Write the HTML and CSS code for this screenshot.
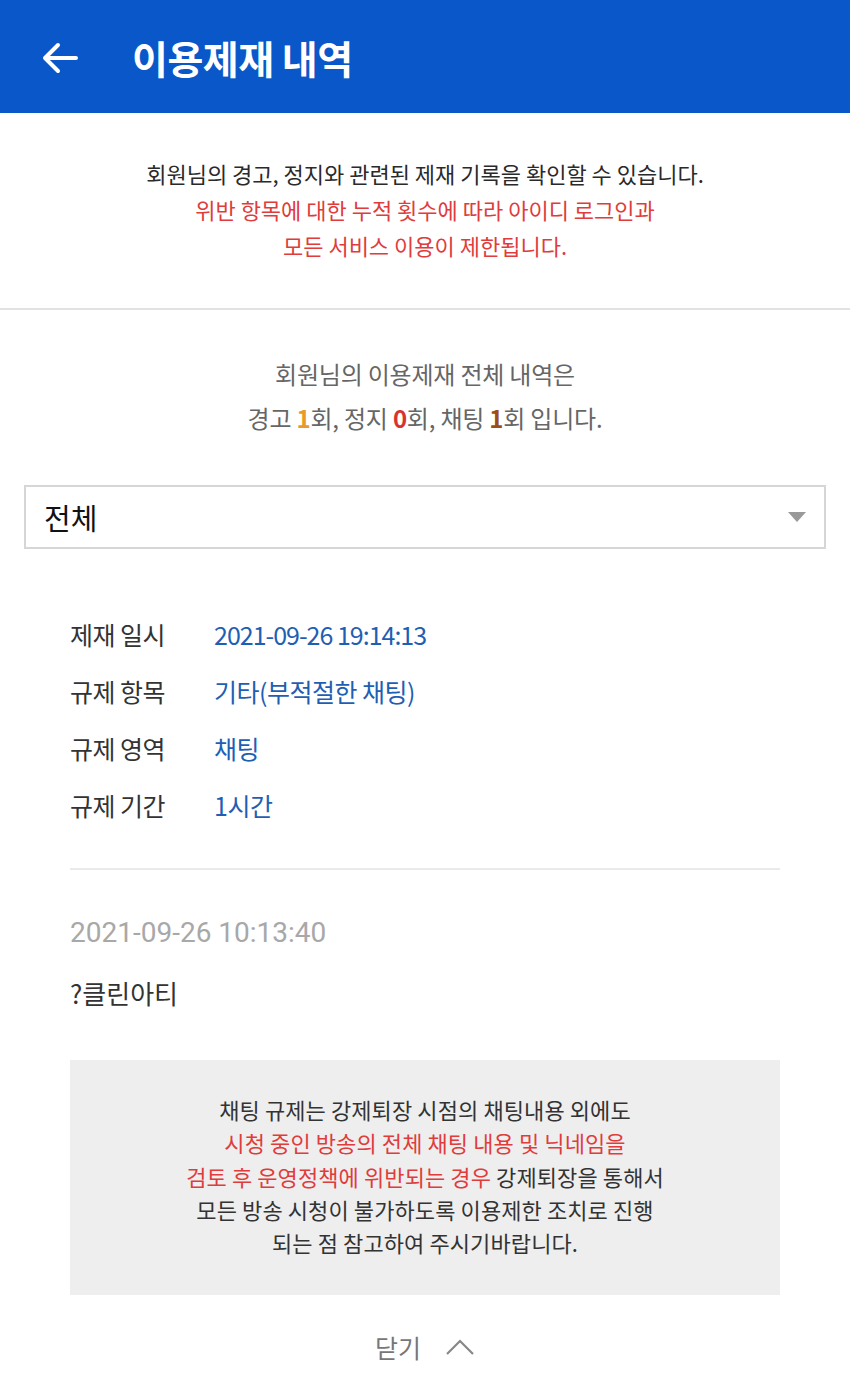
FILE: index.html
```html
<!DOCTYPE html>
<html>

<head>
    <meta charset="UTF-8">
    <title>이용제재 내역</title>

    <link rel="stylesheet" href="styles.css">

</head>

<body>

    <header class="topbar">
        <svg class="back" width="40" height="36" viewBox="0 0 40 36">
            <path d="M36 18 H5 M18 5 L5 18 L18 31" fill="none" stroke="#fff" stroke-width="4" stroke-linecap="round" stroke-linejoin="round"/>
        </svg>
        <h1>이용제재 내역</h1>
    </header>

    <section class="notice">
        <p>회원님의 경고, 정지와 관련된 제재 기록을 확인할 수 있습니다.</p>
        <p class="red">위반 항목에 대한 누적 횟수에 따라 아이디 로그인과<br>모든 서비스 이용이 제한됩니다.</p>
    </section>

    <section class="summary">
        <p>회원님의 이용제재 전체 내역은</p>
        <p>경고 <b class="warn">1</b>회, 정지 <b class="stop">0</b>회, 채팅 <b class="chat">1</b>회 입니다.</p>
    </section>

    <div class="select">
        <span>전체</span>
        <span class="caret"></span>
    </div>

    <section class="record">
        <dl class="details">
            <div class="row"><dt>제재 일시</dt><dd class="num">2021-09-26 19:14:13</dd></div>
            <div class="row"><dt>규제 항목</dt><dd>기타(부적절한 채팅)</dd></div>
            <div class="row"><dt>규제 영역</dt><dd>채팅</dd></div>
            <div class="row"><dt>규제 기간</dt><dd>1시간</dd></div>
        </dl>

        <div class="chatlog">
            <p class="time">2021-09-26 10:13:40</p>
            <p class="msg">?클린아티</p>
        </div>

        <div class="infobox">
            <p>채팅 규제는 강제퇴장 시점의 채팅내용 외에도<br>
                <span class="red">시청 중인 방송의 전체 채팅 내용 및 닉네임을<br>
                검토 후 운영정책에 위반되는 경우</span> 강제퇴장을 통해서<br>
                모든 방송 시청이 불가하도록 이용제한 조치로 진행<br>
                되는 점 참고하여 주시기바랍니다.</p>
        </div>

        <div class="close">
            <span>닫기</span>
            <svg width="30" height="18" viewBox="0 0 30 18">
                <path d="M2 16 L15 3 L28 16" fill="none" stroke="#888" stroke-width="2.2"/>
            </svg>
        </div>
    </section>

</body>

</html>
```

FILE: styles.css
```css
body {
    margin: 0;
    font-family: "Noto Sans CJK KR", "Noto Sans", sans-serif;
    background-color: #fff;
    color: #333;
}

p {
    margin: 0;
}

.red {
    color: #e03c3c;
}

.topbar {
    height: 113px;
    background-color: #0a57c9;
    display: flex;
    align-items: center;
    padding-left: 40px;
    box-sizing: border-box;
}

    .topbar h1 {
        margin: 0 0 0 52px;
        font-size: 39px;
        font-weight: 700;
        color: #fff;
        letter-spacing: -0.5px;
    }

.back {
    margin-top: 2px;
}

.notice {
    text-align: center;
    font-size: 22px;
    line-height: 36px;
    letter-spacing: 0;
    color: #2a2a2a;
    padding: 42px 0 45px 0;
    border-bottom: 2px solid #e2e2e2;
}

.summary {
    text-align: center;
    font-size: 24px;
    line-height: 44px;
    color: #666;
    letter-spacing: -0.2px;
    padding: 42px 0 45px 0;
}

    .summary b {
        font-weight: 700;
    }

.warn {
    color: #ea9a2c;
}

.stop {
    color: #d8332f;
}

.chat {
    color: #9c4e16;
}

.select {
    margin: 0 24px;
    height: 64px;
    border: 2px solid #d6d6d6;
    box-sizing: border-box;
    display: flex;
    align-items: center;
    justify-content: space-between;
    padding: 0 18px 0 18px;
    font-size: 29px;
    color: #111;
}

.caret {
    width: 0;
    height: 0;
    border-left: 9px solid transparent;
    border-right: 9px solid transparent;
    border-top: 10px solid #999;
}

.record {
    margin: 0 70px;
}

.details {
    margin: 56px 0 0 0;
    padding-bottom: 35px;
    border-bottom: 2px solid #eaeaea;
}

    .details .row {
        display: flex;
        height: 57px;
        align-items: center;
        font-size: 25px;
    }

    .details dt {
        width: 144px;
        color: #333;
        letter-spacing: -0.5px;
    }

    .details dd {
        margin: 0;
        color: #1e5fb4;
        letter-spacing: -0.5px;
    }

    .details .num {
        letter-spacing: -1px;
    }

.chatlog {
    padding: 48px 0 0 0;
}

    .chatlog .time {
        font-family: Roboto, "Noto Sans CJK KR", sans-serif;
        font-size: 28px;
        color: #a8a8a8;
        line-height: 30px;
    }

    .chatlog .msg {
        margin-top: 30px;
        font-size: 26px;
        color: #333;
        line-height: 30px;
    }

.infobox {
    margin-top: 52px;
    background-color: #eeeeee;
    height: 235px;
    box-sizing: border-box;
    padding-top: 33px;
    text-align: center;
    font-size: 22px;
    line-height: 33.3px;
    letter-spacing: 0.1px;
    color: #333;
}

.close {
    display: flex;
    justify-content: center;
    align-items: center;
    gap: 24px;
    padding: 35px 0 30px 0;
    font-size: 25px;
    line-height: 34px;
    color: #777;
}
```
